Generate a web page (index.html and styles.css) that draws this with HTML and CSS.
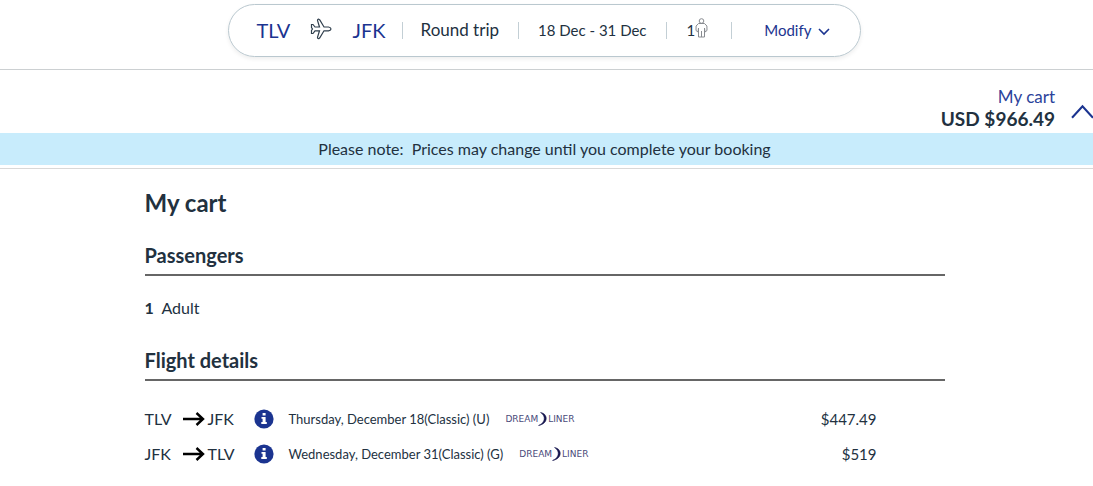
FILE: index.html
```html
<!DOCTYPE html>
<html lang="en">
<head>
<meta charset="utf-8">
<meta name="viewport" content="width=device-width, initial-scale=1">
<title>My cart</title>
<link rel="stylesheet" href="styles.css">
</head>
<body>
<svg class="defs" aria-hidden="true">
  <symbol id="arrow" viewBox="0 0 22 14"><path d="M0 7H20M13.500 1L20 7L13.500 13" fill="none" stroke="#000" stroke-width="2.400"/></symbol>
  <symbol id="info" viewBox="0 0 20 20"><circle cx="10" cy="10" r="9.600" fill="#1b3490"/><path d="M8.600 4h3v2.600h-3zM7.500 8h4.100v5h1.200v2H7.300v-2h1.300v-3.200H7.500z" fill="#fff"/></symbol>
  <symbol id="crescent" viewBox="0 0 10 14"><path d="M2.500 .5C10 1.500 11 11.500 .5 13.500C7.500 10.500 8 4 2.500 .5Z" fill="#16164f" stroke="#16164f" stroke-width=".5"/></symbol>
</svg>
<header class="top">
  <div class="search">
    <span class="route">
      <span class="code">TLV</span>
      <svg class="plane" viewBox="0 0 22 22" aria-hidden="true"><path d="M1.500 6.500H3L5 9H9.500L7.500 2.500Q7.500 1 8.800 1.200L9.800 2L14 9H18.500Q21 9.500 21 11Q21 12.300 18.500 12.800H14L9.800 19.800L8.800 20.600Q7.500 20.800 7.500 19.300L9.500 12.800H5L3 15.500H1.500V12.500L2.500 11L1.500 9.500Z"/></svg>
      <span class="code">JFK</span>
    </span>
    <span class="cell">Round trip</span>
    <span class="cell dates">18 Dec - 31 Dec</span>
    <span class="cell people">1<svg class="person" viewBox="0 0 12 20" aria-hidden="true"><circle cx="6" cy="3" r="2.300"/><path d="M3 5.500H9L11.400 8L11.500 12.500L9.500 14L9 10V19H3V10L2.500 14L.5 12.500L.6 8ZM6 13V19"/></svg></span>
    <button class="modify" type="button">Modify<svg class="chevron" viewBox="0 0 12 8" aria-hidden="true"><path d="M1 1L6 6L11 1"/></svg></button>
  </div>
</header>
<section class="summary">
  <div class="total"><a class="cart-link" href="#cart">My cart</a><strong class="amount">USD $966.49</strong></div>
  <button class="toggle" type="button" aria-label="Collapse cart"><svg class="caret" viewBox="0 0 22 14" aria-hidden="true"><path d="M1 13L11 2L21 13"/></svg></button>
</section>
<div class="notice">Please note:&nbsp; Prices may change until you complete your booking</div>
<main class="cart" id="cart">
  <h1 class="title">My cart</h1>
  <h2 class="heading">Passengers</h2>
  <p class="passengers"><strong>1</strong>&nbsp; Adult</p>
  <h2 class="heading">Flight details</h2>
  <table class="flights">
    <tr><td class="from">TLV</td><td class="way"><svg class="arrow"><use href="#arrow"/></svg></td><td class="to">JFK</td>
      <td class="more"><button class="info" type="button" aria-label="Flight information"><svg class="info-icon"><use href="#info"/></svg></button></td>
      <td class="date"><span class="detail">Thursday, December 18(Classic) (U)<span class="logo">DREAM<svg class="crescent"><use href="#crescent"/></svg>LINER</span></span></td><td class="price">$447.49</td></tr>
    <tr><td class="from">JFK</td><td class="way"><svg class="arrow"><use href="#arrow"/></svg></td><td class="to">TLV</td>
      <td class="more"><button class="info" type="button" aria-label="Flight information"><svg class="info-icon"><use href="#info"/></svg></button></td>
      <td class="date"><span class="detail">Wednesday, December 31(Classic) (G)<span class="logo">DREAM<svg class="crescent"><use href="#crescent"/></svg>LINER</span></span></td><td class="price">$519</td></tr>
  </table>
</main>
</body>
</html>
```
FILE: styles.css
```css
* { box-sizing: border-box; }
body { margin: 0; background: #fff; color: #22313f; font-family: Lato, "Open Sans", sans-serif; font-size: 16px; line-height: 20px; }
button { border: 0; padding: 0; background: none; font: inherit; color: inherit; cursor: pointer; }
.defs { position: absolute; width: 0; height: 0; }
.top { display: flex; justify-content: center; padding: 4px 4px 12px 0; border-bottom: 1px solid #ccd0d2; }
.search { display: flex; align-items: center; border: 1px solid #bac8cf; border-radius: 27px; padding: 15px 30px 16px 28px; box-shadow: 0 2px 4px #00000012; font-size: 17px; line-height: 20px; white-space: nowrap; }
.route { display: flex; align-items: center; justify-content: space-between; width: 129px; margin-right: 16px; }
.code { color: #1b3490; font-size: 20px; }
.plane { width: 22px; height: 22px; margin: -3px 0 -1px; fill: none; stroke: #2f3e4c; stroke-width: 1.2; }
.cell { display: flex; align-items: center; justify-content: center; height: 17px; padding: 0 19px 0 18px; border-left: 1px solid #c3cfd5; }
.dates { padding: 0 19px; font-size: 15px; }
.people { padding: 0 23px 0 20px; border-right: 1px solid #c3cfd5; font-size: 15px; }
.person { width: 13px; height: 20px; margin-top: -4px; fill: none; stroke: #888b90; }
.modify { display: flex; align-items: center; gap: 7px; margin-left: 32px; color: #1b3490; font-size: 15px; line-height: 18px; }
.chevron { width: 12px; height: 8px; margin-top: 3px; fill: none; stroke: #1b3490; stroke-width: 1.6; }
.summary { display: flex; justify-content: flex-end; align-items: center; gap: 16px; padding: 16px 0 3px; overflow: hidden; }
.total { display: flex; flex-direction: column; align-items: flex-end; }
.cart-link { color: #2c439b; font-size: 17px; line-height: 22px; text-decoration: none; }
.amount { font-size: 19px; line-height: 22px; }
.toggle { display: flex; margin: 6px -1px 0 0; }
.caret { width: 23px; height: 15px; fill: none; stroke: #1b3490; stroke-width: 2; }
.notice { padding: 6px 4px 6px 0; background: #c8ecfc; text-align: center; font-size: 16px; }
.cart { margin-top: 3px; padding: 20px 4px 0 0; border-top: 1px solid #d8d8d8; display: grid; grid-template-columns: minmax(0, 800px); justify-content: center; }
.title { margin: 0 0 26px; font-size: 24px; line-height: 28px; }
.heading { margin: 0; padding-bottom: 7px; border-bottom: 2px solid #666; font-size: 20px; line-height: 24px; }
.passengers { margin: 22px 0 30px; font-size: 16px; line-height: 20px; }
.flights { width: 100%; margin-top: 20px; border-collapse: collapse; table-layout: fixed; }
.flights td { height: 35px; padding: 0; white-space: nowrap; }
.from { width: 38px; }
.way { width: 25px; }
.to { width: 46px; }
.more { width: 35px; }
.arrow { display: block; width: 22px; height: 14px; }
.info, .info-icon { display: block; width: 20px; height: 20px; }
.detail { display: flex; align-items: center; gap: 16px; font-size: 13px; }
.logo { display: flex; align-items: center; color: #4a4a7a; font: 9px/14px "DejaVu Sans", sans-serif; }
.crescent { width: 10px; height: 14px; }
.flights .price { width: 150px; padding-right: 68px; text-align: right; font-size: 15px; }
```
